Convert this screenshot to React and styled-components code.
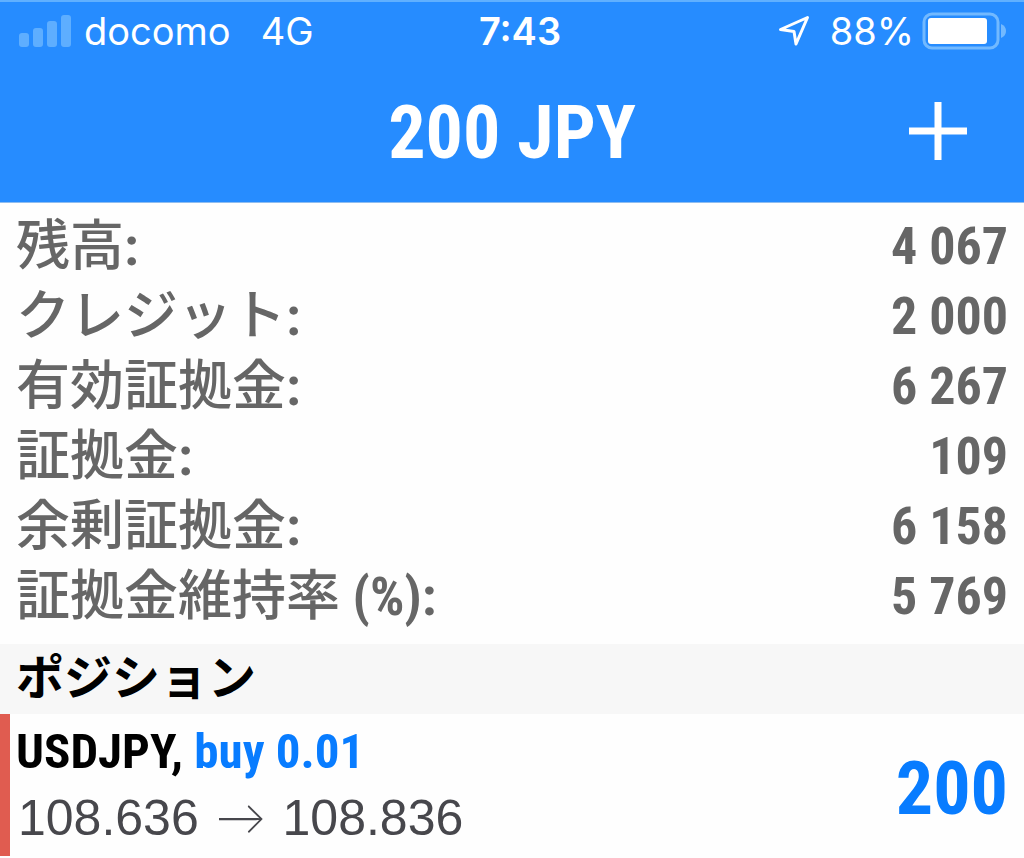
import React from "react";
import styled, { createGlobalStyle } from "styled-components";

const GlobalStyle = createGlobalStyle`
  *, *::before, *::after { box-sizing: border-box; }
  body {
    margin: 0;
    background: #fefefe;
    color: #000;
    font-family: "Roboto Condensed", "Noto Sans CJK JP", sans-serif;
    font-weight: 700;
  }
`;

const Header = styled.header`
  background: #268cff;
  color: #fff;
  border-top: 2px solid #60b0ff;
  border-bottom: 1px solid #8fbdf0;
`;

const StatusBar = styled.div`
  display: grid;
  grid-template-columns: 1fr auto 1fr;
  align-items: center;
  padding: 0 18px;
  font-family: Inter, "Liberation Sans", sans-serif;
  font-size: 38px;
  font-weight: 400;
  line-height: 58px;
`;

const StatusGroup = styled.div`
  display: flex;
  align-items: center;
  justify-content: ${(p) => (p.$end ? "flex-end" : "flex-start")};
  gap: ${(p) => p.$gap}px;
  white-space: nowrap;
`;

const Clock = styled.time`
  padding-left: 16px;
  font-weight: 600;
`;

const NavBar = styled.div`
  display: grid;
  grid-template-columns: 1fr auto 1fr;
  align-items: center;
  height: 142px;
  padding: 0 56px;
`;

const Title = styled.h1`
  grid-column: 2;
  margin: 0;
  padding-top: 4px;
  font-size: 74px;
  line-height: 88px;
`;

const AddButton = styled.button`
  justify-self: end;
  display: flex;
  padding: 0;
  border: 0;
  background: none;
  color: inherit;
  cursor: pointer;
`;

const Summary = styled.dl`
  margin: 0;
  padding: 9px 16px 12px;
  color: #666;
`;

const SummaryRow = styled.div`
  display: flex;
  justify-content: space-between;
  align-items: center;
  line-height: 70px;
  white-space: nowrap;
`;

const Label = styled.dt`
  height: 70px;
  font-size: 54px;
  font-weight: 500;
`;

const Suffix = styled.span`
  font-weight: 700;
`;

const Value = styled.dd`
  height: 70px;
  margin: 0;
  font-size: 52px;
`;

const SectionTitle = styled.h2`
  margin: 0;
  padding: 0 16px;
  height: 70px;
  background: #f7f7f7;
  font-size: 48px;
  line-height: 70px;
`;

const Position = styled.article`
  display: flex;
  justify-content: space-between;
  align-items: center;
  padding: 5px 16px 5px 6px;
  border-left: 10px solid #e05c50;
  white-space: nowrap;
`;

const Instrument = styled.h3`
  margin: 0;
  font-size: 49px;
  line-height: 66px;
`;

const Side = styled.span`
  color: #087cff;
`;

const Prices = styled.p`
  height: 66px;
  margin: 0;
  padding-left: 2px;
  color: #47474c;
  font-family: "Liberation Sans", sans-serif;
  font-size: 50px;
  font-weight: 400;
  line-height: 66px;
`;

const Arrow = styled.span`
  margin: 0 3px;
  font-family: Lato, sans-serif;
  font-weight: 300;
  line-height: 1;
`;

const Profit = styled.output`
  padding-top: 8px;
  color: #087cff;
  font-size: 74px;
  line-height: 88px;
`;

const SignalIcon = () => (
  <svg width="54" height="34" viewBox="0 0 54 34" fill="#5eaeff" aria-hidden="true">
    <rect x="1" y="19" width="10" height="14" rx="3" />
    <rect x="15" y="14" width="10" height="19" rx="3" />
    <rect x="29" y="7" width="10" height="26" rx="3" />
    <rect x="43" y="1" width="10" height="32" rx="3" />
  </svg>
);

const LocationIcon = () => (
  <svg width="32" height="32" viewBox="0 0 32 32" fill="none" stroke="#fff" strokeWidth="3" strokeLinejoin="round" aria-hidden="true">
    <path d="M29.500 2.500 18 29 16 16.500 2.500 14.500Z" />
  </svg>
);

const BatteryIcon = () => (
  <svg width="84" height="38" viewBox="0 0 84 38" aria-hidden="true">
    <rect x="2" y="2" width="74" height="34" rx="8" fill="none" stroke="#72b9ff" strokeWidth="3" />
    <rect x="6" y="6" width="59" height="26" rx="3" fill="#fff" />
    <path d="M79 12Q84 14 84 19T79 26Z" fill="#72b9ff" />
  </svg>
);

const PlusIcon = () => (
  <svg width="60" height="60" viewBox="0 0 60 60" stroke="#fff" strokeWidth="7" aria-hidden="true">
    <path d="M1 30H59M30 1V59" />
  </svg>
);

const account = [
  { label: "残高", suffix: ":", value: "4 067" },
  { label: "クレジット", suffix: ":", value: "2 000" },
  { label: "有効証拠金", suffix: ":", value: "6 267" },
  { label: "証拠金", suffix: ":", value: "109" },
  { label: "余剰証拠金", suffix: ":", value: "6 158" },
  { label: "証拠金維持率", suffix: " (%):", value: "5 769" },
];

export default function App() {
  return (
    <>
      <GlobalStyle />
      <Header>
        <StatusBar>
          <StatusGroup $gap={12}>
            <SignalIcon />
            <StatusGroup $gap={30}>
              <span>docomo</span>
              <span>4G</span>
            </StatusGroup>
          </StatusGroup>
          <Clock>7:43</Clock>
          <StatusGroup $gap={8} $end>
            <StatusGroup $gap={20}>
              <LocationIcon />
              <span>88%</span>
            </StatusGroup>
            <BatteryIcon />
          </StatusGroup>
        </StatusBar>
        <NavBar>
          <Title>200 JPY</Title>
          <AddButton type="button" aria-label="Add">
            <PlusIcon />
          </AddButton>
        </NavBar>
      </Header>
      <main>
        <Summary>
          {account.map(({ label, suffix, value }) => (
            <SummaryRow key={label}>
              <Label>
                {label}
                <Suffix>{suffix}</Suffix>
              </Label>
              <Value>{value}</Value>
            </SummaryRow>
          ))}
        </Summary>
        <SectionTitle>ポジション</SectionTitle>
        <Position>
          <div>
            <Instrument>
              USDJPY, <Side>buy 0.01</Side>
            </Instrument>
            <Prices>
              108.636 <Arrow>→</Arrow> 108.836
            </Prices>
          </div>
          <Profit>200</Profit>
        </Position>
      </main>
    </>
  );
}
